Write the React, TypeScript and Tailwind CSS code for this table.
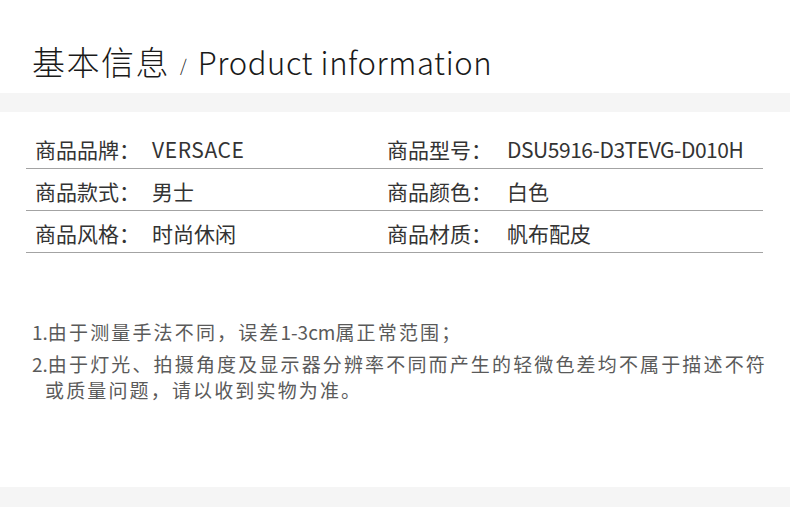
import React from "react";

const font = { fontFamily: '"Noto Sans CJK SC", "Noto Sans", sans-serif' };

const rows: [string, string, string, string][] = [
  ["商品品牌：", "VERSACE", "商品型号：", "DSU5916-D3TEVG-D010H"],
  ["商品款式：", "男士", "商品颜色：", "白色"],
  ["商品风格：", "时尚休闲", "商品材质：", "帆布配皮"],
];

export default function App() {
  return (
    <div className="w-[790px] h-[507px] bg-white overflow-hidden flex flex-col" style={font}>
      <div className="h-[93px] pt-[31px] pl-[32px] flex items-center text-[#1a1a1a]">
        <span className="text-[33px] font-light tracking-[1.5px]">基本信息</span>
        <span className="text-[17px] font-light ml-[10px] mr-[11px] mt-[6px]">/</span>
        <span className="text-[31px] font-light tracking-[0.6px]">Product information</span>
      </div>
      <div className="h-[19px] bg-[#f5f5f5]" />
      <div className="mx-[26px] mt-[15px] w-[737px]">
        {rows.map((r, i) => (
          <div key={i} className="h-[42px] border-b border-[#a3a3a3] grid grid-cols-[361px_1fr] items-center pt-[4px] text-[21px] text-[#333]">
            <div className="flex pl-[9px]">
              <span className="w-[117px]">{r[0]}</span>
              <span className={i === 0 ? "tracking-[0.6px]" : ""}>{r[1]}</span>
            </div>
            <div className="flex">
              <span className="w-[120px]">{r[2]}</span>
              <span className={i === 0 ? "tracking-[-0.45px]" : ""}>{r[3]}</span>
            </div>
          </div>
        ))}
      </div>
      <div className="mt-[66px] pl-[32px] text-[19px] text-[#5a5a5a] tracking-[2.15px] leading-[26px]">
        <div>
          <span className="tracking-[0px]">1.</span>由于测量手法不同，误差<span className="tracking-[0px]">1-3cm</span>属正常范围；
        </div>
        <div className="mt-[6px]">
          <span className="tracking-[0px]">2.</span>由于灯光、拍摄角度及显示器分辨率不同而产生的轻微色差均不属于描述不符
        </div>
        <div className="pl-[13px]">或质量问题，请以收到实物为准。</div>
      </div>
      <div className="flex-1" />
      <div className="h-[20px] bg-[#f5f5f5]" />
    </div>
  );
}
